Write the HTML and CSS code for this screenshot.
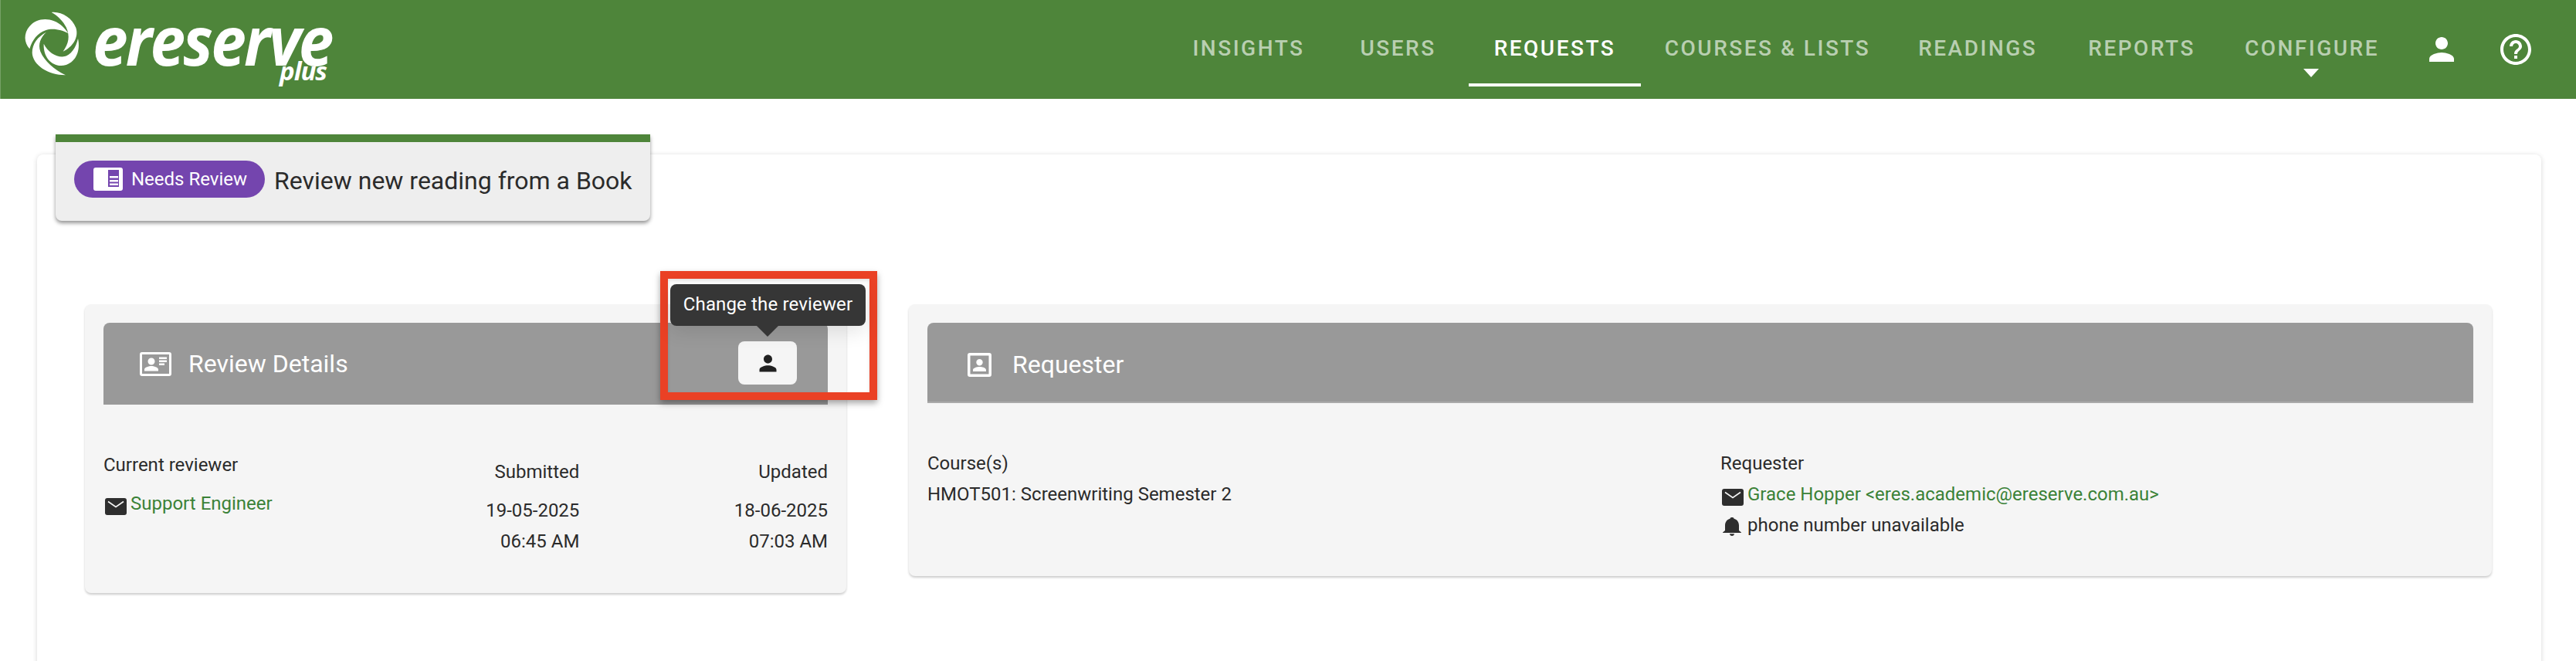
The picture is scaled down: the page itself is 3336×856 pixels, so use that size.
FILE: index.html
```html
<!DOCTYPE html>
<html lang="en">
<head>
<meta charset="utf-8">
<title>Review new reading from a Book</title>
<link rel="stylesheet" href="styles.css">
</head>
<body>
<header class="topbar">
  <a class="logo">
    <svg class="swirl" viewBox="0 0 255 270"><path fill="#fff" d="M125 18C165 14 205 40 220 78C232 115 208 152 170 170C192 138 198 112 182 76C170 52 150 32 125 18Z"/><path fill="#fff" d="M40 160C18 135 16 100 40 72C62 46 100 38 135 52C160 62 178 80 190 100C165 86 130 78 102 88C72 98 50 125 40 160Z"/><path fill="#fff" d="M105 95C72 112 50 140 50 175C52 222 110 262 180 262C135 240 98 208 82 170C72 142 82 115 105 95Z"/><path fill="#fff" d="M95 140C112 172 140 192 172 190C200 186 220 155 228 120C238 165 222 208 182 222C132 236 92 196 95 140Z"/></svg>
    <span class="wordmark">ereserve</span>
    <span class="plus">plus</span>
  </a>
  <nav class="nav">
    <a class="nav-item item-insights">Insights</a>
    <a class="nav-item item-users">Users</a>
    <a class="nav-item active">Requests</a>
    <a class="nav-item">Courses &amp; Lists</a>
    <a class="nav-item item-readings">Readings</a>
    <a class="nav-item item-reports">Reports</a>
    <a class="nav-item caret">Configure</a>
    <svg class="nav-icon person-nav" viewBox="0 0 24 24"><path fill="#fff" d="M12 12c2.21 0 4-1.79 4-4s-1.79-4-4-4-4 1.79-4 4 1.79 4 4 4zm0 2c-2.67 0-8 1.34-8 4v2h16v-2c0-2.66-5.33-4-8-4z"/></svg>
    <svg class="nav-icon help-nav" viewBox="0 0 24 24"><path fill="#fff" d="M11 18h2v-2h-2v2zm1-16C6.48 2 2 6.48 2 12s4.48 10 10 10 10-4.48 10-10S17.52 2 12 2zm0 18c-4.41 0-8-3.59-8-8s3.59-8 8-8 8 3.59 8 8-3.59 8-8 8zm0-14c-2.21 0-4 1.79-4 4h2c0-1.1.9-2 2-2s2 .9 2 2c0 2-3 1.75-3 5h2c0-2.25 3-2.5 3-5 0-2.21-1.79-4-4-4z"/></svg>
  </nav>
</header>

<main class="sheet">
  <div class="title-card">
    <span class="pill">
      <svg class="pill-icon" viewBox="0 0 38 30"><path fill="#fff" fill-rule="evenodd" d="M3 0H35a3 3 0 0 1 3 3V27a3 3 0 0 1-3 3H3a3 3 0 0 1-3-3V3a3 3 0 0 1 3-3ZM19 3V25H33V3ZM21 11H32V13.500H21ZM21 16H32V18.500H21ZM21 20.500H32V23H21Z"/></svg>
      Needs Review
    </span>
    <h1 class="title">Review new reading from a Book</h1>
  </div>

  <div class="cards">
    <section class="card card-left">
      <div class="card-head">
        <svg class="head-icon" viewBox="0 0 41 31"><path fill="#fff" fill-rule="evenodd" d="M3 0H38a3 3 0 0 1 3 3V28a3 3 0 0 1-3 3H3a3 3 0 0 1-3-3V3a3 3 0 0 1 3-3ZM3 3V28H38V3ZM15 7.500a4.500 4.500 0 1 1 0 9 4.500 4.500 0 0 1 0-9ZM6 24.500V22.500C6 19.500 12 18 15 18S24 19.500 24 22.500V24.500ZM25 6.500H35V9H25ZM25 10.500H35V13H25ZM25 14.500H32V17H25Z"/></svg>
        <h2 class="head-title">Review Details</h2>
        <button class="change-btn" type="button">
          <svg class="btn-icon" viewBox="0 0 24 24"><path fill="#212121" d="M12 12c2.210 0 4-1.790 4-4s-1.790-4-4-4-4 1.790-4 4 1.790 4 4 4zm0 2c-2.670 0-8 1.340-8 4v2h16v-2c0-2.660-5.330-4-8-4z"/></svg>
        </button>
      </div>
      <div class="details">
        <div class="reviewer">
          <div class="label">Current reviewer</div>
          <div class="contact first">
            <svg class="mail" viewBox="0 0 28 22"><rect width="28" height="22" rx="3" fill="#2e2e2e"/><polyline points="4,4.500 14,11.500 24,4.500" fill="none" stroke="#f5f5f5" stroke-width="1.600"/></svg>
            <a class="link">Support Engineer</a>
          </div>
        </div>
        <div class="dates date-sub"><div>Submitted</div><div class="date-val">19-05-2025</div><div class="date-val">06:45 AM</div></div>
        <div class="dates date-upd"><div>Updated</div><div class="date-val">18-06-2025</div><div class="date-val">07:03 AM</div></div>
      </div>
    </section>

    <section class="card card-right">
      <div class="card-head head-right">
        <svg class="head-icon-2" viewBox="0 0 31 31"><path fill="#fff" fill-rule="evenodd" d="M3 0H28a3 3 0 0 1 3 3V28a3 3 0 0 1-3 3H3a3 3 0 0 1-3-3V3a3 3 0 0 1 3-3ZM3.500 3.500V27.500H27.500V3.500ZM15.500 8a4.200 4.200 0 1 1 0 8.400 4.200 4.200 0 0 1 0-8.400ZM7 24V22C7 19.500 12.500 18 15.500 18S24 19.500 24 22V24Z"/></svg>
        <h2 class="head-title">Requester</h2>
      </div>
      <div class="req-body">
        <div class="req-col">
          <div class="row">Course(s)</div>
          <div class="row">HMOT501: Screenwriting Semester 2</div>
        </div>
        <div class="req-col">
          <div class="row">Requester</div>
          <div class="row contact">
            <svg class="mail" viewBox="0 0 28 22"><rect width="28" height="22" rx="3" fill="#2e2e2e"/><polyline points="4,4.500 14,11.500 24,4.500" fill="none" stroke="#f5f5f5" stroke-width="1.600"/></svg>
            <a class="link">Grace Hopper &lt;eres.academic@ereserve.com.au&gt;</a>
          </div>
          <div class="row contact">
            <svg class="bell" viewBox="0 0 24 24"><path fill="#2e2e2e" d="M12 24c1.600 0 3-1.300 3-2.800H9c0 1.500 1.400 2.800 3 2.800zm9-7v-6.500c0-4.200-2.200-7.800-6.500-8.800V1.300C14.500.600 13.400 0 12 0S9.500.600 9.500 1.300v.400C5.200 2.700 3 6.300 3 10.500V17l-3 2.500V20h24v-.500z"/></svg>
            <span>phone number unavailable</span>
          </div>
        </div>
      </div>
    </section>
  </div>
</main>

<div class="callout">
  <div class="tooltip">Change the reviewer</div>
</div>
```

FILE: styles.css
```css
* { box-sizing: border-box; }
html, body { margin: 0; padding: 0; height: 856px; overflow: hidden; }
body { background: #fff; font-family: Roboto, "Liberation Sans", sans-serif; color: #2b2b2b; font-size: 24px; position: relative; }

.topbar { height: 128px; background: #4e853a; border-left: 1px solid #76a166; display: flex; align-items: flex-start; justify-content: space-between; }
.logo { display: flex; align-items: flex-start; position: relative; margin: 10px 0 0 24px; }
.swirl { width: 85px; height: 90px; display: block; flex: none; }
.wordmark { margin-left: 10px; margin-top: 13px; color: #fff; font-family: "Open Sans", sans-serif; font-weight: 700; font-style: italic; font-size: 88px; line-height: 56px; letter-spacing: -3px; transform: scaleX(.93); transform-origin: left top; display: block; }
.plus { position: absolute; left: 337px; top: 69px; color: #fff; font-family: "Open Sans", sans-serif; font-weight: 700; font-style: italic; font-size: 33px; line-height: 26px; letter-spacing: -1px; }

.nav { display: flex; align-items: flex-start; height: 128px; padding-right: 54px; }
.nav-item { height: 112px; padding: 44px 31px 0; font-weight: 500; font-size: 28px; line-height: 38px; letter-spacing: 2.500px; text-transform: uppercase; color: #b9cfb1; white-space: nowrap; position: relative; border-bottom: 4px solid transparent; }
.item-insights { margin-right: 10px; }
.item-users { margin-right: 11px; }
.item-readings { margin-right: 4px; }
.item-reports { margin-right: 2px; }
.nav-item.active { color: #fff; border-bottom-color: #fff; padding-left: 33px; padding-right: 32.500px; }
.nav-item.caret::after { content: ""; position: absolute; left: 50%; top: 89px; margin-left: -10.500px; border-left: 10.500px solid transparent; border-right: 10.500px solid transparent; border-top: 11px solid #fff; }
.nav-icon { flex: none; display: block; }
.person-nav { width: 48px; height: 48px; margin: 40px 0 0 26px; }
.help-nav { width: 48px; height: 48px; margin: 40px 0 0 48px; }

.sheet { position: relative; margin: 72px 45px 0 48px; height: 700px; background: #fff; border-radius: 8px; box-shadow: 0 1px 6px rgba(0,0,0,.16); }
.title-card { position: absolute; left: 24px; top: -26px; width: 770px; height: 112px; background: #eee; border-top: 10px solid #4e853a; border-radius: 0 0 8px 8px; box-shadow: 0 3px 5px rgba(0,0,0,.42); display: flex; align-items: flex-start; padding: 24px 0 0 24px; }
.pill { display: flex; align-items: center; width: 247px; height: 48px; border-radius: 24px; background: #7445ae; color: #fff; font-size: 24px; padding-left: 25px; flex: none; white-space: nowrap; }
.pill-icon { width: 38px; height: 30px; margin-right: 11px; flex: none; }
.title { margin: 2px 0 0 12px; font-weight: 400; font-size: 32px; line-height: 48px; color: #2b2b2b; white-space: nowrap; }

.cards { display: flex; align-items: flex-start; padding: 194px 0 0 62px; }
.card { background: #f5f5f5; border-radius: 8px; box-shadow: 0 2px 3px rgba(0,0,0,.2); padding: 24px 24px 0; flex: none; }
.card-left { width: 986px; height: 374px; }
.card-right { width: 2050px; height: 352px; margin-left: 81px; }
.card-head { height: 106px; background: #999; border-radius: 8px 8px 0 0; display: flex; align-items: center; padding-left: 47px; position: relative; color: #fff; }
.head-right { height: 104px; padding: 6px 0 0 52px; border-bottom: 2px solid #aaa; }
.head-icon { width: 41px; height: 31px; margin-right: 22px; flex: none; }
.head-icon-2 { width: 31px; height: 31px; margin-right: 27px; flex: none; }
.head-title { margin: 0; font-weight: 400; font-size: 32px; line-height: 40px; }
.change-btn { position: absolute; left: 822px; top: 24px; width: 76px; height: 56px; padding: 0; border: 0; background: #f5f5f5; border-radius: 8px; display: flex; align-items: center; justify-content: center; }
.btn-icon { width: 33px; height: 33px; display: block; }

.details { display: flex; padding-top: 60px; }
.reviewer { width: 400px; }
.label { line-height: 36px; }
.contact { display: flex; align-items: flex-start; line-height: 40px; }
.contact.first { margin-top: 12px; }
.mail { width: 28px; height: 22px; flex: none; margin: 13px 5px 0 2px; }
.bell { width: 24px; height: 24px; flex: none; margin: 10px 8px 0 3px; }
.link { color: #3b8238; white-space: nowrap; }
.dates { text-align: right; padding-top: 7px; line-height: 40px; }
.date-sub { width: 217px; }
.date-upd { width: 322px; }
.date-sub > div:first-child, .date-upd > div:first-child { margin-bottom: 10px; }

.req-body { display: grid; grid-template-columns: 1027px 1fr; padding-top: 58px; }
.row { line-height: 40px; white-space: nowrap; }

.callout { position: absolute; left: 855px; top: 351px; width: 281px; height: 167px; border: 10px solid #ea4125; box-shadow: 0 4px 8px rgba(0,0,0,.35), inset 0 2px 4px rgba(0,0,0,.12); }
.tooltip { position: absolute; left: 3px; top: 7px; width: 253px; height: 54px; border-radius: 8px; background: #363636; color: #fff; font-size: 24px; line-height: 52px; text-align: center; letter-spacing: .15px; white-space: nowrap; box-shadow: 0 8px 24px rgba(0,0,0,.1); }
.tooltip::after { content: ""; position: absolute; left: 112px; top: 54px; border-left: 14px solid transparent; border-right: 14px solid transparent; border-top: 14px solid #363636; }
```
